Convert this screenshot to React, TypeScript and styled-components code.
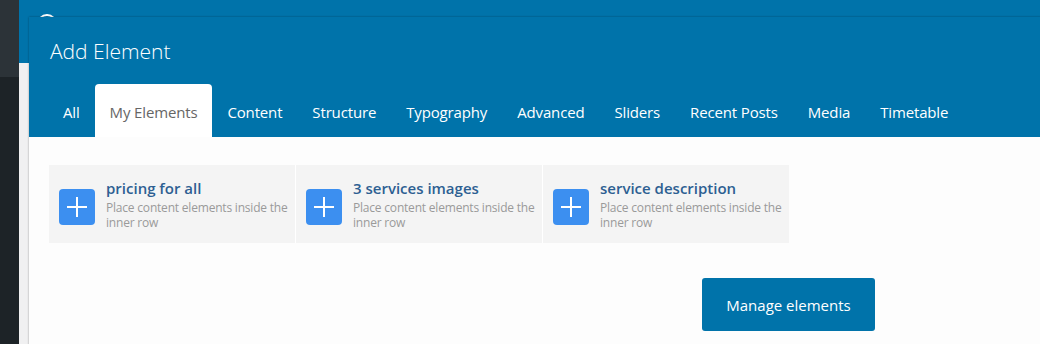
import React from "react";
import styled, { createGlobalStyle } from "styled-components";

const GlobalStyle = createGlobalStyle`
  html, body { margin: 0; padding: 0; }
  body {
    width: 1040px;
    height: 344px;
    overflow: hidden;
    font-family: "Open Sans", "Noto Sans", sans-serif;
    background: #f0f0f1;
  }
`;

const Page = styled.div`
  display: flex;
  width: 1040px;
  height: 344px;
  overflow: hidden;
`;

const Sidebar = styled.div`
  width: 19px;
  display: flex;
  flex-direction: column;
  flex-shrink: 0;
`;

const SidebarTop = styled.div`
  height: 77px;
  background: #2c3338;
`;

const SidebarRest = styled.div`
  flex: 1;
  background: #1d2327;
`;

const Main = styled.div`
  flex: 1;
  position: relative;
  display: flex;
  flex-direction: column;
`;

const TopBar = styled.div`
  height: 63px;
  background: #0073aa;
  position: relative;
`;

const Ring = styled.div`
  position: absolute;
  left: 18px;
  top: 14px;
  width: 20px;
  height: 20px;
  box-sizing: border-box;
  border: 2px solid #ffffff;
  border-radius: 50%;
`;

const PageBg = styled.div`
  flex: 1;
  background: #f0f0f1;
`;

const Modal = styled.div`
  position: absolute;
  left: 10px;
  top: 17px;
  right: -40px;
  bottom: -100px;
  background: #fdfdfd;
  box-shadow: 0 0 2px rgba(0, 0, 0, 0.35);
  display: flex;
  flex-direction: column;
`;

const Header = styled.div`
  background: #0073aa;
  display: flex;
  flex-direction: column;
`;

const Title = styled.h1`
  margin: 0;
  padding: 24px 0 0 21px;
  font-size: 21px;
  line-height: 21px;
  font-weight: 300;
  color: #ffffff;
`;

const Tabs = styled.div`
  display: flex;
  margin-top: 22px;
  padding-left: 19px;
`;

const Tab = styled.div<{ $active?: boolean }>`
  padding: 18px 15px 15px;
  line-height: 20px;
  font-size: 15px;
  letter-spacing: -0.15px;
  color: ${(p) => (p.$active ? "#666666" : "#ffffff")};
  background: ${(p) => (p.$active ? "#ffffff" : "transparent")};
  border-radius: 4px 4px 0 0;
  white-space: nowrap;
`;

const Body = styled.div`
  padding: 28px 20px 0 20px;
  display: flex;
  flex-direction: column;
`;

const CardGrid = styled.div`
  display: grid;
  grid-template-columns: repeat(3, 246px);
  gap: 1px;
  background: #ffffff;
  width: max-content;
`;

const Card = styled.div`
  display: flex;
  align-items: flex-start;
  gap: 11px;
  height: 78px;
  box-sizing: border-box;
  padding: 13px 4px 0 10px;
  background: #f4f4f4;
`;

const IconBox = styled.div`
  width: 36px;
  height: 36px;
  flex-shrink: 0;
  margin-top: 11px;
  border-radius: 4px;
  background: #3c8ff0;
  display: flex;
  align-items: center;
  justify-content: center;
`;

const CardText = styled.div`
  display: flex;
  flex-direction: column;
  min-width: 0;
`;

const CardTitle = styled.div`
  font-size: 15px;
  line-height: 20px;
  font-weight: 600;
  color: #2d5f92;
  white-space: nowrap;
`;

const CardDesc = styled.div`
  margin-top: 2px;
  font-size: 12px;
  line-height: 15px;
  letter-spacing: -0.2px;
  color: #9a9a9a;
`;

const ButtonRow = styled.div`
  display: flex;
  margin-top: 35px;
  padding-left: 653px;
`;

const ManageButton = styled.button`
  width: 173px;
  height: 53px;
  border: none;
  border-radius: 3px;
  background: #0073aa;
  color: #ffffff;
  font-family: "Open Sans", "Noto Sans", sans-serif;
  font-size: 15px;
  padding: 0;
  cursor: pointer;
`;

const Plus = () => (
  <svg width="22" height="22" viewBox="0 0 22 22">
    <path d="M11 1v20M1 11h20" stroke="#ffffff" strokeWidth="2" fill="none" />
  </svg>
);

const tabs = [
  "All",
  "My Elements",
  "Content",
  "Structure",
  "Typography",
  "Advanced",
  "Sliders",
  "Recent Posts",
  "Media",
  "Timetable",
];

const elements = ["pricing for all", "3 services images", "service description"];

export default function App() {
  return (
    <>
      <GlobalStyle />
      <Page>
        <Sidebar>
          <SidebarTop />
          <SidebarRest />
        </Sidebar>
        <Main>
          <TopBar>
            <Ring />
          </TopBar>
          <PageBg />
          <Modal>
            <Header>
              <Title>Add Element</Title>
              <Tabs>
                {tabs.map((t) => (
                  <Tab key={t} $active={t === "My Elements"}>
                    {t}
                  </Tab>
                ))}
              </Tabs>
            </Header>
            <Body>
              <CardGrid>
                {elements.map((e) => (
                  <Card key={e}>
                    <IconBox>
                      <Plus />
                    </IconBox>
                    <CardText>
                      <CardTitle>{e}</CardTitle>
                      <CardDesc>Place content elements inside the inner row</CardDesc>
                    </CardText>
                  </Card>
                ))}
              </CardGrid>
              <ButtonRow>
                <ManageButton>Manage elements</ManageButton>
              </ButtonRow>
            </Body>
          </Modal>
        </Main>
      </Page>
    </>
  );
}
